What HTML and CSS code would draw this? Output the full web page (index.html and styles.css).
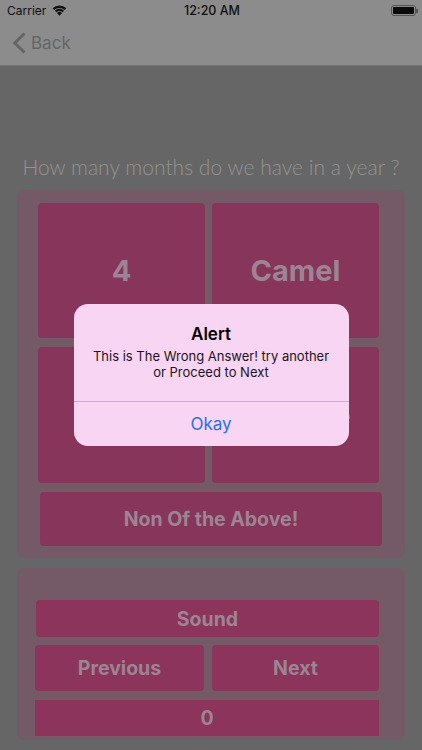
FILE: index.html
```html
<!DOCTYPE html>
<html lang="en">
<head>
<meta charset="utf-8">
<title>Quiz</title>
<link rel="stylesheet" href="styles.css">
</head>
<body>
<header class="top">
  <div class="status">
    <div class="status-left">
      <span>Carrier</span>
      <svg class="wifi" viewBox="0 0 16 12" width="15" height="11"><path d="M8 11.8 5.2 8.8a4 4 0 0 1 5.6 0z"/><path d="M4.5 8 3 6.3a7 7 0 0 1 10 0L11.500 8a5 5 0 0 0-7 0z"/><path d="M2.300 5.500.4 3.600a10.800 10.800 0 0 1 15.200 0l-1.900 1.900a8.200 8.200 0 0 0-11.400 0z"/></svg>
    </div>
    <span class="time">12:20 AM</span>
    <div class="battery"><span class="battery-fill"></span></div>
  </div>
  <nav class="nav">
    <svg class="chevron" viewBox="0 0 14 24" width="14" height="24"><path d="M12.500 2.500 2.800 12l9.700 9.500" fill="none" stroke="#656565" stroke-width="3"/></svg>
    <span>Back</span>
  </nav>
</header>
<main class="content">
  <p class="question">How many months do we have in a year ?</p>
  <section class="panel answers">
    <div class="grid">
      <button class="cell big">4</button>
      <button class="cell big">Camel</button>
      <button class="cell big"></button>
      <button class="cell big shifted">Twelve</button>
    </div>
    <button class="cell none">Non Of the Above!</button>
  </section>
  <section class="panel controls">
    <button class="cell sound">Sound</button>
    <div class="pair">
      <button class="cell">Previous</button>
      <button class="cell">Next</button>
    </div>
    <div class="cell score">0</div>
  </section>
</main>
<div class="alert">
  <div class="alert-body">
    <h1>Alert</h1>
    <p>This is The Wrong Answer! try another or Proceed to Next</p>
  </div>
  <div class="alert-action">Okay</div>
</div>
</body>
</html>
```
FILE: styles.css
```css
* { box-sizing: border-box; }
html, body { margin: 0; height: 100%; }
body {
  width: 422px;
  height: 750px;
  overflow: hidden;
  position: relative;
  background: #666666;
  font-family: Inter, "Liberation Sans", sans-serif;
}
.top { height: 66px; background: #8c8c8c; border-bottom: 1px solid #777; }
.status {
  height: 21px;
  padding: 0 6px 0 7px;
  display: grid;
  grid-template-columns: 1fr auto 1fr;
  align-items: center;
  font-size: 12px;
  color: #111;
}
.status-left { display: flex; align-items: center; gap: 6px; }
.wifi { fill: #111; }
.time { font-weight: 500; font-size: 12.5px; margin-left: 1px; }
.battery {
  justify-self: end;
  width: 25px;
  height: 11px;
  border: 1px solid #555;
  border-radius: 3px;
  padding: 1px;
  position: relative;
}
.battery::after {
  content: "";
  position: absolute;
  right: -3px;
  top: 3px;
  width: 2px;
  height: 4px;
  background: #555;
}
.battery-fill { display: block; height: 100%; background: #0a0a0a; border-radius: 1px; }
.nav {
  height: 44px;
  display: flex;
  align-items: center;
  gap: 5px;
  padding-left: 12px;
  font-size: 17px;
  color: #656565;
}
.content { display: flex; flex-direction: column; align-items: center; }
.question {
  margin: 87px 0 0;
  height: 37px;
  line-height: 28px;
  font-family: Lato, sans-serif;
  font-weight: 300;
  font-size: 21px;
  letter-spacing: .03px;
  color: #939393;
  white-space: nowrap;
}
.panel { width: 388px; background: #735a66; border-radius: 8px; }
.answers { height: 368px; padding: 13px 0 0 21px; }
.grid {
  width: 341px;
  display: grid;
  grid-template-columns: 167px 167px;
  grid-template-rows: 135px 136px;
  gap: 9px 7px;
}
.cell {
  border: 0;
  padding: 0;
  margin: 0;
  display: flex;
  align-items: center;
  justify-content: center;
  background: #88355c;
  border-radius: 4px;
  color: #9c8592;
  font-family: Inter, "Liberation Sans", sans-serif;
  font-size: 19.5px;
  font-weight: 700;
}
.big { font-size: 29px; }
.shifted { padding-left: 9px; }
.none { width: 342px; height: 54px; margin: 9px 0 0 2px; }
.controls {
  height: 172px;
  margin-top: 10px;
  padding: 32px 26px 0 18px;
  display: flex;
  flex-direction: column;
}
.controls .cell { background: #8c345c; }
.sound { height: 37px; margin-left: 1px; }
.pair {
  display: grid;
  grid-template-columns: 169px 167px;
  gap: 8px;
  height: 46px;
  margin-top: 8px;
}
.controls .score { height: 36px; margin-top: 9px; border-radius: 0; }
.alert {
  position: absolute;
  left: 73.5px;
  top: 304px;
  width: 275px;
  height: 142px;
  background: #f8d5f2;
  border-radius: 14px;
  display: flex;
  flex-direction: column;
  color: #000;
  overflow: hidden;
}
.alert-body {
  height: 98px;
  border-bottom: 1px solid #e89ccf;
  padding: 20px 16px 0;
  text-align: center;
}
.alert-body h1 { margin: 0; font-size: 17px; line-height: 21px; font-weight: 600; }
.alert-body p { margin: 3px 0 0; font-size: 13px; line-height: 16px; color: #1d1420; }
.alert-action {
  flex: 1;
  display: flex;
  align-items: center;
  justify-content: center;
  font-size: 17px;
  color: #2a70e8;
}
```
